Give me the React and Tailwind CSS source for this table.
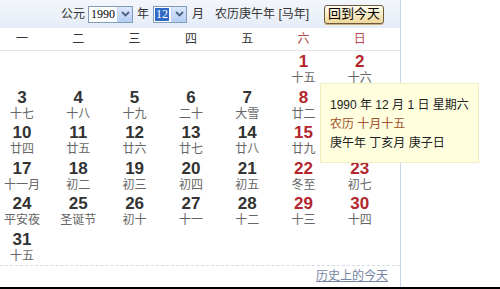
import React from "react";

const font = { fontFamily: '"Liberation Sans", "Noto Sans CJK SC", sans-serif' };

const weeks = [
  [null, null, null, null, null, ["1", "十五"], ["2", "十六"]],
  [["3", "十七"], ["4", "十八"], ["5", "十九"], ["6", "二十"], ["7", "大雪"], ["8", "廿二"], ["9", "廿三"]],
  [["10", "廿四"], ["11", "廿五"], ["12", "廿六"], ["13", "廿七"], ["14", "廿八"], ["15", "廿九"], ["16", "三十"]],
  [["17", "十一月"], ["18", "初二"], ["19", "初三"], ["20", "初四"], ["21", "初五"], ["22", "冬至"], ["23", "初七"]],
  [["24", "平安夜"], ["25", "圣诞节"], ["26", "初十"], ["27", "十一"], ["28", "十二"], ["29", "十三"], ["30", "十四"]],
  [["31", "十五"], null, null, null, null, null, null],
];

const heads = ["一", "二", "三", "四", "五", "六", "日"];

function Arrow() {
  return (
    <div className="w-[15px] h-full bg-gradient-to-b from-[#dce7fb] to-[#b6cdf5] border-l border-[#c3d3f0] flex items-center justify-center">
      <svg width="9" height="6" viewBox="0 0 9 6">
        <path d="M1 1 L4.5 4.5 L8 1" stroke="#4d6185" strokeWidth="1.8" fill="none" />
      </svg>
    </div>
  );
}

export default function App() {
  return (
    <div className="w-[500px] h-[289px] bg-white relative overflow-hidden border-b-2 border-black" style={font}>
      <div className="w-[401px] h-full border-r border-[#c9d6e6] overflow-hidden">
        {/* header */}
        <div className="h-[28px] bg-gradient-to-b from-[#f3f6fb] to-[#e6edf8] flex items-center text-[12px] text-[#333]">
          <span className="ml-[61px]">公元</span>
          <div className="ml-[3px] w-[45px] h-[17px] border border-[#7f9db9] bg-white flex items-stretch">
            <span className="flex-1 text-[12px] leading-[15px] pl-[2px] text-black" style={{ fontFamily: '"Liberation Serif", serif' }}>1990</span>
            <Arrow />
          </div>
          <span className="ml-[4px]">年</span>
          <div className="ml-[4px] w-[34px] h-[17px] border border-[#7f9db9] bg-white flex items-stretch">
            <span className="m-[1px] px-[1px] bg-[#316ac5] text-white text-[12px] leading-[13px]" style={{ fontFamily: '"Liberation Serif", serif' }}>12</span>
            <div className="flex-1" />
            <Arrow />
          </div>
          <span className="ml-[5px]">月</span>
          <span className="ml-[11px]">农历庚午年 [马年]</span>
          <button className="ml-[15px] h-[19px] px-[3px] rounded-[3px] border border-[#6b5a3a] bg-gradient-to-b from-[#fffdf0] to-[#f0d89a] text-[13px] leading-[16px] text-black shadow-[0_1px_0_#c9b27a]">
            回到今天
          </button>
        </div>
        {/* weekday header */}
        <div className="h-[23px] border-b border-[#e3e3e3] grid grid-cols-[repeat(7,44px)] gap-x-[12.3px] items-center text-[12px]">
          {heads.map((h, i) => (
            <div key={h} className={`text-center ${i >= 5 ? "text-[#b84a4f]" : "text-[#333]"}`}>{h}</div>
          ))}
        </div>
        {/* days */}
        <div>
          {weeks.map((w, ri) => (
            <div key={ri} className="h-[35.5px] pt-[2px] grid grid-cols-[repeat(7,44px)] gap-x-[12.3px]">
              {w.map((d, ci) =>
                d ? (
                  <div key={ci} className="flex flex-col items-center">
                    <span className={`text-[17px] font-bold leading-[18px] ${ci >= 5 ? "text-[#b3262d]" : "text-[#333]"}`}>{d[0]}</span>
                    <span className="text-[12px] leading-[14px] text-[#666]">{d[1]}</span>
                  </div>
                ) : (
                  <div key={ci} />
                )
              )}
            </div>
          ))}
        </div>
        <div className="mt-[1px] border-t border-dashed border-[#d6dbe4]" />
        <div className="flex justify-end pr-[12px] pt-[2px]">
          <a className="text-[12px] leading-[16px] text-[#7685a6] underline">历史上的今天</a>
        </div>
      </div>
      {/* tooltip */}
      <div className="absolute left-[320px] top-[83px] w-[159px] h-[80px] bg-[#ffffe0] border border-[#efeebf] px-[9px] pt-[12px] text-[12px] leading-[19px] text-[#222]">
        <div>1990 年 12 月 1 日 星期六</div>
        <div className="text-[#a0522d]">农历 十月十五</div>
        <div>庚午年 丁亥月 庚子日</div>
      </div>
    </div>
  );
}
